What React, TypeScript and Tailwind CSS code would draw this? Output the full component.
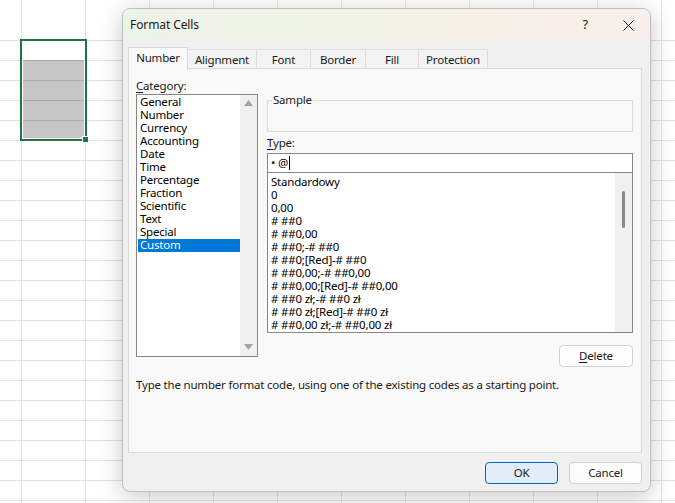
import React from "react";

const categories = [
  "General",
  "Number",
  "Currency",
  "Accounting",
  "Date",
  "Time",
  "Percentage",
  "Fraction",
  "Scientific",
  "Text",
  "Special",
  "Custom",
];

const types = [
  "Standardowy",
  "0",
  "0,00",
  "# ##0",
  "# ##0,00",
  "# ##0;-# ##0",
  "# ##0;[Red]-# ##0",
  "# ##0,00;-# ##0,00",
  "# ##0,00;[Red]-# ##0,00",
  "# ##0 zł;-# ##0 zł",
  "# ##0 zł;[Red]-# ##0 zł",
  "# ##0,00 zł;-# ##0,00 zł",
];

const tabs = [
  { label: "Number", w: "w-[60px]" },
  { label: "Alignment", w: "w-[69px]" },
  { label: "Font", w: "w-[54px]" },
  { label: "Border", w: "w-[55px]" },
  { label: "Fill", w: "w-[53px]" },
  { label: "Protection", w: "w-[69px]" },
];

function Tri({ down }: { down?: boolean }) {
  return (
    <svg width="9" height="6" viewBox="0 0 9 6">
      {down ? (
        <polygon points="0,0 9,0 4.5,6" fill="#a3a3a3" />
      ) : (
        <polygon points="0,6 9,6 4.5,0" fill="#a3a3a3" />
      )}
    </svg>
  );
}

export default function App() {
  return (
    <div
      className="relative w-[675px] h-[503px] overflow-hidden bg-white text-[11.5px] tracking-[-0.2px] text-[#1a1a1a] [background-image:linear-gradient(90deg,#e1e1e1_1px,transparent_1px)] [background-size:64px_100%] [background-position:21px_0]"
      style={{ fontFamily: '"Segoe UI", "Noto Sans", sans-serif' }}
    >
      <div className="mt-[40px] h-[463px] [background-image:linear-gradient(180deg,#e1e1e1_1px,transparent_1px)] [background-size:100%_20px]" />

      {/* selection */}
      <div className="absolute left-[20px] top-[39px] w-[67px] h-[102px] border-2 border-[#217346] bg-white">
        <div className="ml-px mr-px mt-[19px] h-[78px] bg-[#c6c6c6] flex flex-col">
          <div className="h-[20px] border-t border-[#ababab]" />
          <div className="h-[20px] border-t border-[#ababab]" />
          <div className="h-[20px] border-t border-[#ababab]" />
          <div className="h-[18px] border-t border-[#ababab]" />
        </div>
        <div className="absolute right-[-4px] bottom-[-4px] w-[7px] h-[7px] bg-[#217346] border border-white" />
      </div>

      {/* dialog */}
      <div className="absolute left-[122px] top-[8px] w-[529px] h-[484px] rounded-[8px] border border-[#bfbfbf] bg-[#f0f0f0] shadow-[0_4px_22px_rgba(0,0,0,0.22)] overflow-hidden flex flex-col">
        {/* title bar */}
        <div className="h-[31px] shrink-0 flex items-center pl-[7px] pr-[16px] bg-[linear-gradient(90deg,#ecf4e7_0%,#f0f3e6_40%,#f5f1e6_65%,#f7efeb_100%)]">
          <span className="text-[12px] tracking-[-0.1px] text-[#1a1a1a]">Format Cells</span>
          <span className="ml-auto mr-[35px] text-[13px] text-[#1a1a1a]">?</span>
          <svg width="11" height="11" viewBox="0 0 11 11" className="mt-[1px]">
            <path d="M0.5 0.5 L10.5 10.5 M10.5 0.5 L0.5 10.5" stroke="#1a1a1a" strokeWidth="1" />
          </svg>
        </div>

        {/* body */}
        <div className="flex-1 flex flex-col pl-[5px] pr-[8px]">
          {/* tabs */}
          <div className="h-[28px] flex items-end shrink-0">
            {tabs.map((t, i) =>
              i === 0 ? (
                <div
                  key={t.label}
                  className={`${t.w} h-[22px] -mb-px relative z-10 border border-b-0 border-[#d9d9d9] bg-[#f9f9f9] flex items-center justify-center pb-[1px]`}
                >
                  {t.label}
                </div>
              ) : (
                <div
                  key={t.label}
                  className={`${t.w} h-[19px] border border-l-0 border-b-0 border-[#dedede] bg-[#f3f3f3] flex items-center justify-center pt-[1px]`}
                >
                  {t.label}
                </div>
              )
            )}
          </div>

          {/* panel */}
          <div className="h-[385px] border border-[#d9d9d9] bg-[#f9f9f9] pt-[9px] pl-[7px] pr-[7px] flex flex-col">
            <div className="flex gap-[9px]">
              {/* left */}
              <div className="w-[122px] flex flex-col">
                <div className="h-[16px] leading-[15px]">
                  <span className="underline underline-offset-2">C</span>ategory:
                </div>
                <div className="h-[263px] border border-[#868686] bg-white flex">
                  <div className="flex-1 pt-px pl-px">
                    {categories.map((c) => (
                      <div
                        key={c}
                        className={`h-[13px] leading-[12px] pl-[2px] ${
                          c === "Custom" ? "bg-[#0078d7] text-white" : "text-[#000]"
                        }`}
                      >
                        {c}
                      </div>
                    ))}
                  </div>
                  <div className="w-[17px] bg-[#f0f0f0] flex flex-col items-center justify-between pt-[5px] pb-[6px]">
                    <Tri />
                    <Tri down />
                  </div>
                </div>
              </div>

              {/* right */}
              <div className="w-[366px] flex flex-col pt-[22px]">
                <div className="h-[32px] border border-[#dcdcdc] relative">
                  <span className="absolute left-[5px] top-[-9px] bg-[#f9f9f9] leading-[15px] text-[#1a1a1a]">
                    Sample
                  </span>
                </div>
                <div className="mt-[4px] h-[14px] leading-[14px] mb-[3px]">
                  <span className="underline underline-offset-2">T</span>ype:
                </div>
                <div className="h-[20px] border border-[#868686] bg-white flex items-center pl-[3px] text-[#000]">
                  <span>• @</span>
                  <span className="inline-block w-px h-[14px] bg-black ml-px" />
                </div>
                <div className="h-[161px] -mt-px border border-[#868686] bg-white flex">
                  <div className="flex-1 pt-[3px] pl-[3px] overflow-hidden">
                    {types.map((t) => (
                      <div key={t} className="h-[13px] leading-[12px] whitespace-nowrap text-[#000]">
                        {t}
                      </div>
                    ))}
                  </div>
                  <div className="w-[17px] bg-[#f0f0f0] pt-[18px] flex justify-center">
                    <div className="w-[3px] h-[37px] rounded-full bg-[#8a8a8a]" />
                  </div>
                </div>
                <div className="mt-[12px] flex justify-end">
                  <div className="w-[74px] h-[22px] rounded-[4px] border border-[#d0d0d0] bg-[#fdfdfd] flex items-center justify-center">
                    <span>
                      <span className="underline underline-offset-2">D</span>elete
                    </span>
                  </div>
                </div>
              </div>
            </div>
            <div className="mt-[10px] leading-[16px]">
              Type the number format code, using one of the existing codes as a starting point.
            </div>
          </div>

          {/* footer */}
          <div className="flex justify-end gap-[11px] pt-[9px]">
            <div className="w-[73px] h-[22px] rounded-[4px] border border-[#0067c0] bg-[#e1eefa] flex items-center justify-center">
              OK
            </div>
            <div className="w-[73px] h-[22px] rounded-[4px] border border-[#d0d0d0] bg-[#fdfdfd] flex items-center justify-center">
              Cancel
            </div>
          </div>
        </div>
      </div>
    </div>
  );
}
